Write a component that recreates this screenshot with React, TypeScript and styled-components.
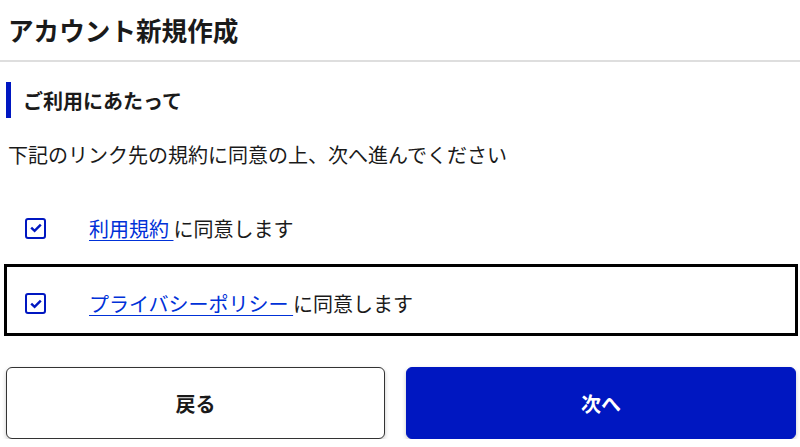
import React, {useState} from 'react';
import styled, {createGlobalStyle} from 'styled-components'

const GlobalStyle = createGlobalStyle`
  body {
    margin: 0;
    background: #ffffff;
    color: #1a1a1a;
    font-family: "Noto Sans CJK JP", "Noto Sans", sans-serif;
  }
`

const Page = styled.div`
  width: 800px;
  display: flex;
  flex-direction: column;
`

const Header = styled.header`
  height: 60px;
  display: flex;
  align-items: center;
  padding: 0 8px;
  border-bottom: 2px solid #dedede;
`

const Title = styled.h1`
  margin: 0;
  font-size: 25.6px;
  font-weight: 700;
  line-height: 1;
`

const SectionTitle = styled.h2`
  margin: 20px 0 0 6px;
  height: 36px;
  display: flex;
  align-items: center;
  padding-left: 12px;
  border-left: 5px solid #0017c1;
  font-size: 20px;
  font-weight: 700;
`

const Lead = styled.p`
  margin: 20px 0 20px 8px;
  font-size: 20px;
  line-height: 34px;
`

const AgreeRow = styled.label<{ $focused: boolean }>`
  margin: 0 2px 0 4px;
  height: 72px;
  box-sizing: border-box;
  display: flex;
  align-items: center;
  padding: ${({$focused}) => ($focused ? '7px' : '0')} 0 0 18px;
  border: 3px solid ${({$focused}) => ($focused ? '#000000' : 'transparent')};
  font-size: 20px;
  cursor: pointer;
`

const Box = styled.span`
  width: 21px;
  height: 21px;
  box-sizing: border-box;
  border: 2.5px solid #0017c1;
  border-radius: 3px;
  display: flex;
  align-items: center;
  justify-content: center;
  margin-right: 43px;
`

const Link = styled.a`
  color: #0031d8;
  text-decoration: underline;
  text-underline-offset: 3px;
  text-decoration-thickness: 1px;
`

const Actions = styled.div`
  margin-top: 31px;
  padding: 0 4px 0 6px;
  display: grid;
  grid-template-columns: 379fr 390fr;
  gap: 21px;
`

const Button = styled.button<{ $primary?: boolean }>`
  height: 72px;
  border-radius: 6px;
  border: 1px solid ${({$primary}) => ($primary ? '#0017c1' : '#333333')};
  background: ${({$primary}) => ($primary ? '#0017c1' : '#ffffff')};
  color: ${({$primary}) => ($primary ? '#ffffff' : '#1a1a1a')};
  box-shadow: 0 2px 4px rgba(0, 0, 0, 0.22);
  font-family: inherit;
  font-size: 20px;
  font-weight: 700;
  cursor: pointer;
`

const Check = () => (
    <Box>
        <svg width="12" height="10" viewBox="0 0 12 10">
            <path d="M1.2 4.6 L4.6 7.9 L10.8 1.6" fill="none" stroke="#0017c1" strokeWidth="2.4"/>
        </svg>
    </Box>
)

const App: React.FC = () => {
    const [focused] = useState('privacy')

    return (
        <Page>
            <GlobalStyle/>
            <Header>
                <Title>アカウント新規作成</Title>
            </Header>
            <SectionTitle>ご利用にあたって</SectionTitle>
            <Lead>下記のリンク先の規約に同意の上、次へ進んでください</Lead>
            <AgreeRow $focused={focused === 'terms'}>
                <Check/>
                <span><Link href="#">利用規約 </Link>に同意します</span>
            </AgreeRow>
            <AgreeRow $focused={focused === 'privacy'}>
                <Check/>
                <span><Link href="#">プライバシーポリシー </Link>に同意します</span>
            </AgreeRow>
            <Actions>
                <Button>戻る</Button>
                <Button $primary>次へ</Button>
            </Actions>
        </Page>
    );
};

export default App;
